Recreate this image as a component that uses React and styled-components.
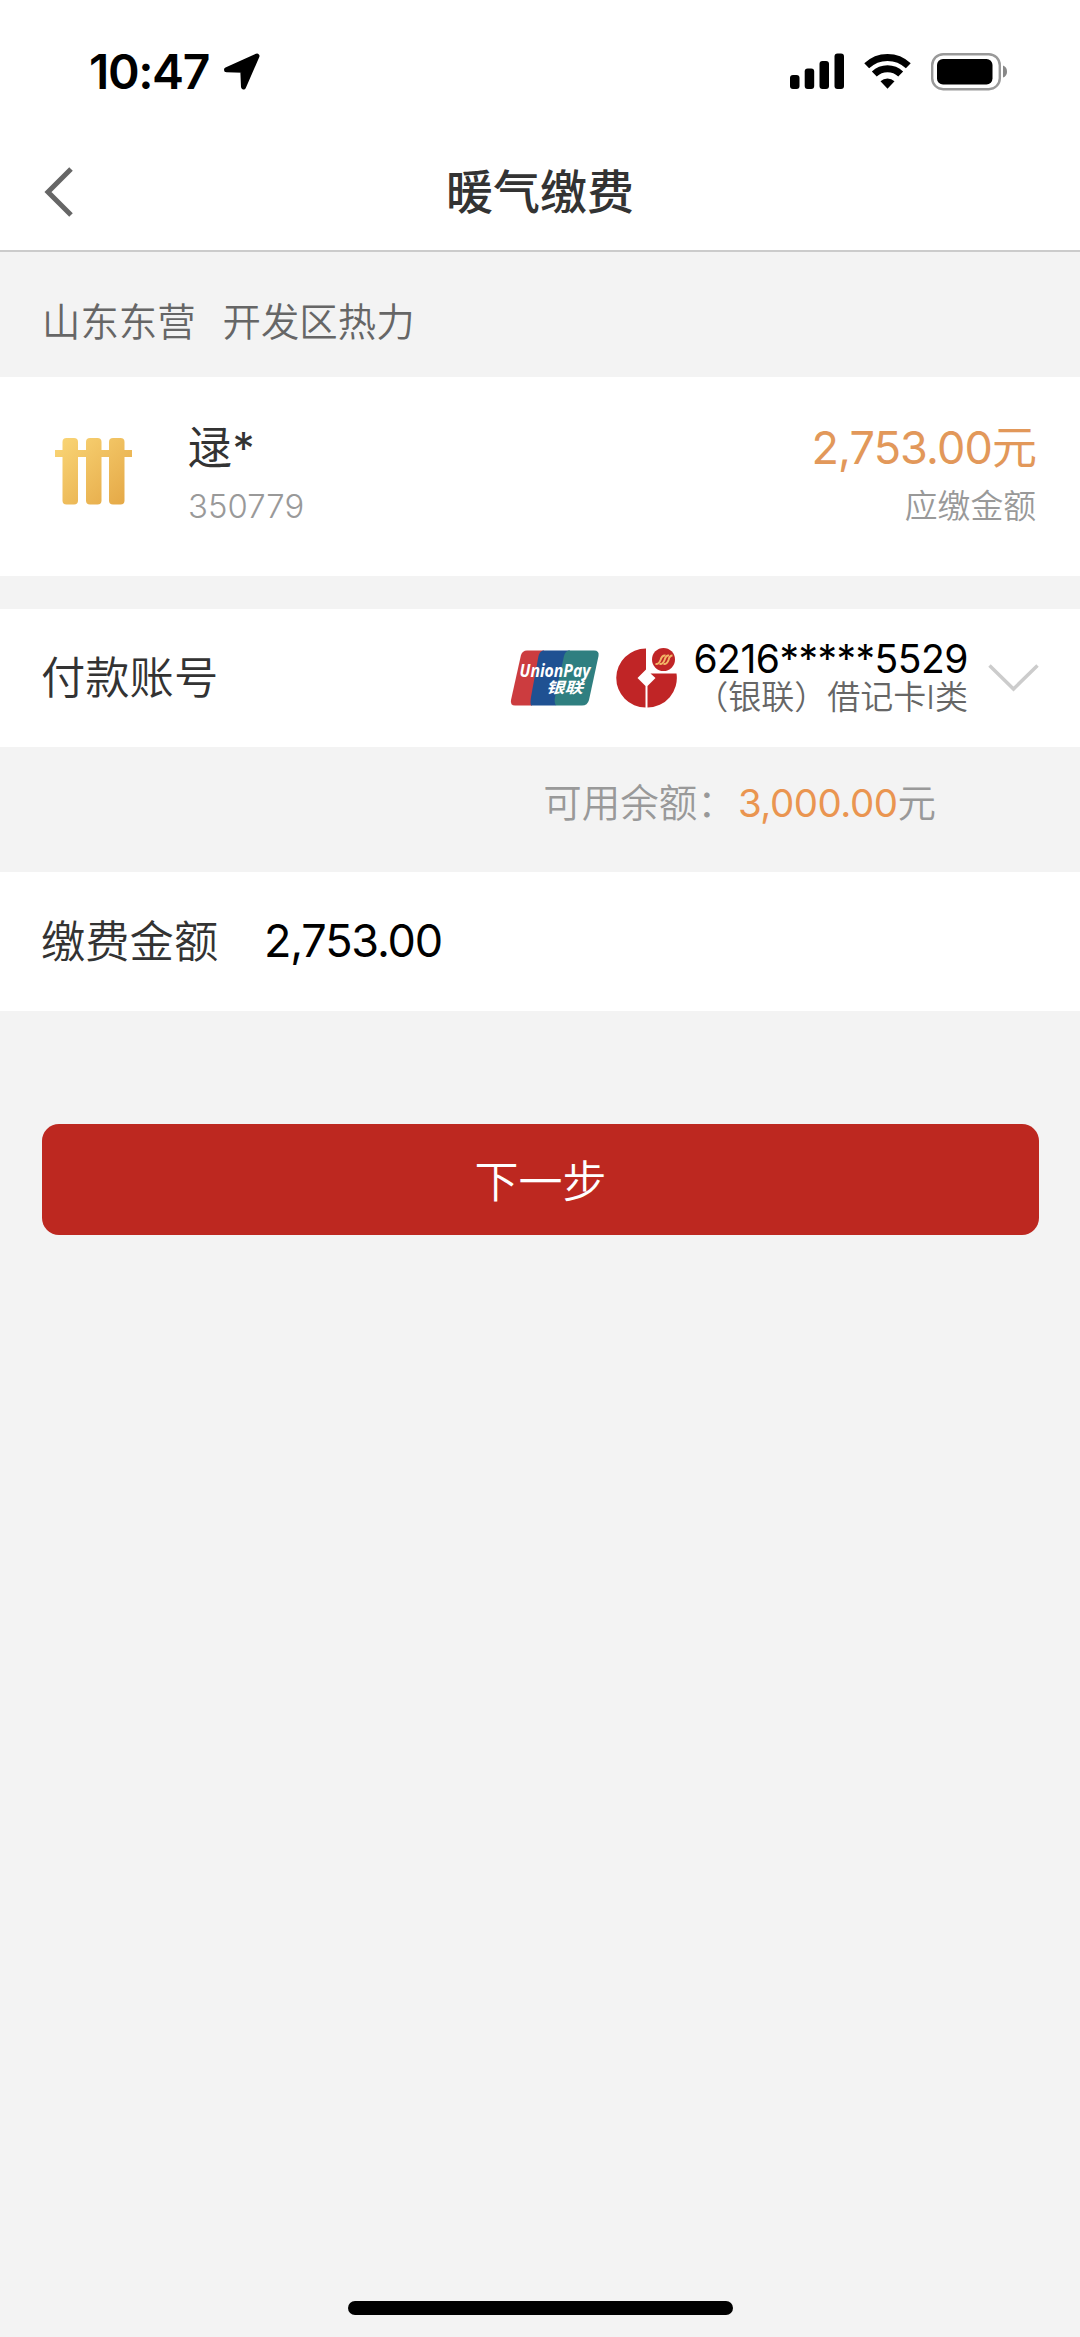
import React from 'react';
import styled, { createGlobalStyle } from 'styled-components';

const GlobalStyle = createGlobalStyle`
  * {
    box-sizing: border-box;
  }

  body {
    margin: 0;
    background-color: #f3f3f3;
    font-family: Inter, "Noto Sans CJK SC", sans-serif;
    font-weight: 350;
  }
`;

const Screen = styled.div`
  display: flex;
  flex-direction: column;
  width: 1080px;
  height: 2337px;
  background-color: #f3f3f3;
`;

const StatusBar = styled.div`
  display: flex;
  justify-content: space-between;
  align-items: center;
  height: 143px;
  padding: 0 73px 0 89px;
  background-color: white;
`;

const StatusGroup = styled.div`
  display: flex;
  align-items: center;
  gap: ${props => props.$gap}px;
`;

const Clock = styled.span`
  width: 123px;
  color: black;
  font-size: 48px;
  font-weight: 600;
  letter-spacing: -1.4px;
  line-height: 56px;
  white-space: nowrap;
`;

const NavBar = styled.header`
  display: grid;
  grid-template-columns: 120px 1fr 120px;
  align-items: center;
  height: 109px;
  padding-bottom: 9px;
  border-bottom: 2px solid #cbcbcb;
  background-color: white;
`;

const BackButton = styled.button`
  display: flex;
  padding: 0 0 0 44px;
  border: 0;
  background: none;
`;

const Title = styled.h1`
  margin: 0;
  color: #333;
  font-size: 47px;
  font-weight: 500;
  line-height: 60px;
  text-align: center;
`;

const Company = styled.div`
  display: flex;
  gap: 27px;
  height: 125px;
  padding: 42px 42px 0;
  color: #666;
  font-size: 38.4px;
  line-height: 56px;
`;

const BillCard = styled.section`
  display: flex;
  align-items: flex-start;
  height: 199px;
  padding: 39px 44px 0 54px;
  background-color: white;
`;

const BillIcon = styled.div`
  display: flex;
  width: 134px;
  padding-top: 22px;
`;

const BillColumn = styled.div`
  display: flex;
  flex: 1;
  flex-direction: column;
  align-items: ${props => (props.$right ? 'flex-end' : 'flex-start')};
`;

const BillMain = styled.span`
  color: ${props => (props.$amount ? '#e2985a' : '#333')};
  font-size: ${props => (props.$amount ? 45 : 44)}px;
  font-weight: 400;
  letter-spacing: ${props => (props.$amount ? '-0.9px' : '0.6px')};
  line-height: 64px;
`;

const BillSub = styled.span`
  color: #999;
  font-size: 32.8px;
  letter-spacing: ${props => (props.$digits ? '0.1px' : '0')};
  line-height: 52px;
`;

const Row = styled.section`
  display: flex;
  align-items: center;
  height: ${props => props.$height}px;
  margin-top: ${props => props.$top || 0}px;
  padding: 0 41px;
  background-color: white;
`;

const RowLabel = styled.label`
  width: 223px;
  color: #333;
  font-size: 44.3px;
  line-height: 60px;
`;

const Account = styled.div`
  display: flex;
  flex: 1;
  justify-content: flex-end;
  align-items: center;
`;

const CardText = styled.div`
  display: flex;
  flex-direction: column;
  align-items: flex-end;
  width: 291px;
  margin-right: 20px;
`;

const CardNumber = styled.span`
  color: black;
  font-size: 39px;
  font-weight: 400;
  letter-spacing: -0.5px;
  line-height: 38px;
`;

const CardType = styled.span`
  color: #666;
  font-size: 33px;
  line-height: 38px;
  white-space: nowrap;
`;

const Balance = styled.div`
  display: flex;
  justify-content: flex-end;
  height: 125px;
  padding: 28px 144px 0 0;
  color: #999;
  font-size: 38.5px;
  line-height: 56px;
`;

const BalanceAmount = styled.span`
  margin-left: 2px;
  color: #ea9550;
  font-weight: 400;
  letter-spacing: -0.5px;
`;

const PayAmount = styled.span`
  color: black;
  font-size: 45px;
  font-weight: 400;
  letter-spacing: -1.2px;
  line-height: 58px;
  padding-bottom: 2px;
`;

const NextButton = styled.button`
  height: 111px;
  margin: 113px 41px 0 42px;
  padding: 4px 0 0;
  border: 0;
  border-radius: 17px;
  background-color: #bd2820;
  color: white;
  font-family: inherit;
  font-size: 44px;
  font-weight: 350;
  line-height: 60px;
`;

const HomeIndicator = styled.div`
  width: 385px;
  height: 14px;
  margin: auto auto 22px;
  border-radius: 7px;
  background-color: black;
`;

const LocationIcon = () => (
  <svg width="36" height="37" viewBox="0 0 36 37">
    <path d="M2.500 16.800 L33 3 L19.500 34 L18.800 17.300 Z" stroke="black" strokeWidth="5" strokeLinejoin="round" />
  </svg>
);

const SignalIcon = () => (
  <svg width="55" height="37" viewBox="0 0 55 37">
    <rect x="0" y="22" width="9.500" height="14" rx="3" />
    <rect x="14.700" y="15.500" width="9.500" height="20.500" rx="3" />
    <rect x="29.500" y="8" width="9.500" height="28" rx="3" />
    <rect x="44.500" y="0.500" width="9.500" height="35.500" rx="3" />
  </svg>
);

const WifiIcon = () => (
  <svg width="47" height="37" viewBox="0 0 47 37" fill="none" stroke="black">
    <path d="M2.700 12.800 A30 30 0 0 1 44.300 12.800" strokeWidth="7" />
    <path d="M10.300 21 A19 19 0 0 1 36.700 21" strokeWidth="7" />
    <path d="M16.500 28.200 A10.500 10.500 0 0 1 30.500 28.200 L23.500 35.700 Z" fill="black" stroke="none" />
  </svg>
);

const BatteryIcon = () => (
  <svg width="77" height="38" viewBox="0 0 77 38">
    <rect x="2.200" y="1.200" width="67.600" height="35" rx="11" fill="none" stroke="#999" strokeWidth="2.400" />
    <rect x="7" y="6" width="55.500" height="25.500" rx="6" />
    <path d="M73 12.500 Q77 14 77 18.700 Q77 23 73 24.500 Z" fill="#888" />
  </svg>
);

const RadiatorIcon = () => (
  <svg width="79" height="68" viewBox="0 0 79 68">
    <defs>
      <linearGradient id="gold" gradientUnits="userSpaceOnUse" x1="8" y1="0" x2="70" y2="66">
        <stop offset="0" stopColor="#f9d475" />
        <stop offset="1" stopColor="#e5a947" />
      </linearGradient>
    </defs>
    <g fill="url(#gold)">
      <rect x="1" y="12" width="77" height="7" />
      <rect x="8.500" y="0" width="15.500" height="66.500" rx="4" />
      <rect x="32" y="0" width="15.500" height="66.500" rx="4" />
      <rect x="55" y="0" width="15.500" height="66.500" rx="4" />
    </g>
  </svg>
);

const LogoText = styled.text`
  fill: white;
  font-style: italic;
  font-weight: 700;
  font-size: ${props => props.$size}px;
  font-family: "Open Sans", "Noto Sans CJK SC", sans-serif;
`;

const UnionPayLogo = () => (
  <svg width="90" height="56" viewBox="0 0 90 56">
    <path d="M17 0.500 H34 L22 55.500 H5 Q0 55.500 1 50 L11 5 Q12.500 0.500 17 0.500 Z" fill="#cc3c3f" />
    <path d="M33 0.500 H60 L46 55.500 H21 Q20 53 21 47 L28.500 6 Q29.500 1.500 33 0.500 Z" fill="#1f5192" />
    <path d="M58.500 0.500 H84 Q89.500 0.500 88.500 6 L79 50 Q77.500 55.500 72 55.500 H46 Q44 53 45 47 L54 6 Q55 1.500 58.500 0.500 Z" fill="#2f7f80" />
    <LogoText $size={17} x="9.500" y="27" textLength="71" lengthAdjust="spacingAndGlyphs">UnionPay</LogoText>
    <LogoText $size={15} x="36" y="43" textLength="37" lengthAdjust="spacingAndGlyphs">银联</LogoText>
  </svg>
);

const BankLogo = () => (
  <svg width="61" height="60" viewBox="0 0 61 60">
    <g fill="#c02526">
      <path d="M30 0.500 V21.500 L21.500 30 L29.500 38 V59.500 A29.500 29.500 0 0 1 30 0.500 Z" />
      <path d="M60.500 25.500 A29.500 29.500 0 0 1 31.500 59.500 V38 L39.500 30 L34.500 25.500 Z" />
      <circle cx="47.500" cy="11.500" r="11.500" />
    </g>
    <g fill="none" stroke="#f2b566" strokeWidth="2">
      <path d="M39.500 16 Q43 16.500 44.500 12 Q46 7 49.500 7.500" />
      <path d="M43.500 16 Q47 16.500 48.500 12 Q50 7 53 7.500" />
      <path d="M47.500 16 Q51 16.500 52.500 12 Q53.500 7.500 56.500 7.500" />
    </g>
  </svg>
);

const Logos = styled.div`
  display: flex;
  align-items: center;
  gap: 16px;
`;

const BackArrow = () => (
  <svg width="30" height="50" viewBox="0 0 30 50" fill="none" stroke="#666" strokeWidth="5">
    <path d="M27 2 L4 25 L27 48" />
  </svg>
);

const DownArrow = () => (
  <svg width="51" height="28" viewBox="0 0 51 28" fill="none" stroke="#ccc" strokeWidth="3.500">
    <path d="M1.500 1.500 L25.500 25 L49.500 1.500" />
  </svg>
);

export default function App() {
  return (
    <Screen>
      <GlobalStyle />
      <StatusBar>
        <StatusGroup $gap={12}>
          <Clock>10:47</Clock>
          <LocationIcon />
        </StatusGroup>
        <StatusGroup $gap={19}>
          <SignalIcon />
          <WifiIcon />
          <BatteryIcon />
        </StatusGroup>
      </StatusBar>

      <NavBar>
        <BackButton><BackArrow /></BackButton>
        <Title>暖气缴费</Title>
      </NavBar>

      <Company>
        <span>山东东营</span>
        <span>开发区热力</span>
      </Company>

      <BillCard>
        <BillIcon><RadiatorIcon /></BillIcon>
        <BillColumn>
          <BillMain>逯*</BillMain>
          <BillSub $digits>350779</BillSub>
        </BillColumn>
        <BillColumn $right>
          <BillMain $amount>2,753.00元</BillMain>
          <BillSub>应缴金额</BillSub>
        </BillColumn>
      </BillCard>

      <Row $height={138} $top={33}>
        <RowLabel>付款账号</RowLabel>
        <Account>
          <Logos>
            <UnionPayLogo />
            <BankLogo />
          </Logos>
          <CardText>
            <CardNumber>6216*****5529</CardNumber>
            <CardType>（银联）借记卡I类</CardType>
          </CardText>
          <DownArrow />
        </Account>
      </Row>

      <Balance>
        <span>可用余额：</span>
        <BalanceAmount>3,000.00</BalanceAmount>
        <span>元</span>
      </Balance>

      <Row $height={139}>
        <RowLabel>缴费金额</RowLabel>
        <PayAmount>2,753.00</PayAmount>
      </Row>

      <NextButton>下一步</NextButton>
      <HomeIndicator />
    </Screen>
  );
}
